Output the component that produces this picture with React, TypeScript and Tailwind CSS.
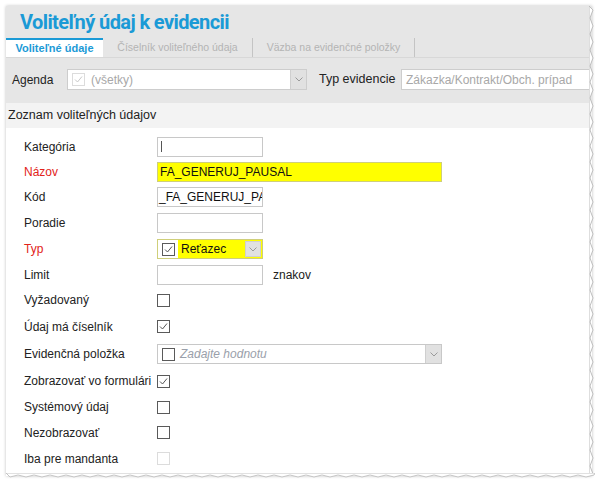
import React from "react";

const font = { fontFamily: '"Liberation Sans", Arial, sans-serif' };

function Check({ checked = false, disabled = false }: { checked?: boolean; disabled?: boolean }) {
  return (
    <div
      className={`w-[13px] h-[13px] border bg-white flex items-center justify-center ${
        disabled ? "border-[#dcdcdc]" : "border-[#5a5a5a]"
      }`}
    >
      {checked && (
        <svg width="11" height="11" viewBox="0 0 11 11">
          <path d="M2 5.5 L4.5 8 L9 2.5" fill="none" stroke={disabled ? "#c8c8c8" : "#555"} strokeWidth="1" />
        </svg>
      )}
    </div>
  );
}

function DropBtn({ className = "" }: { className?: string }) {
  return (
    <div className={`w-[16px] h-full bg-[#e1e1e1] border-l border-[#cfcfcf] flex items-center justify-center ${className}`}>
      <svg width="8" height="5" viewBox="0 0 8 5">
        <path d="M0.5 0.5 L4 4 L7.5 0.5" fill="none" stroke="#9a9a9a" strokeWidth="1" />
      </svg>
    </div>
  );
}

function Row({ h, label, red = false, children }: { h: string; label: string; red?: boolean; children?: React.ReactNode }) {
  return (
    <div className={`flex items-center ${h}`}>
      <div className={`w-[151px] shrink-0 pl-[18px] text-[12px] whitespace-nowrap ${red ? "text-[#e2231a]" : "text-[#222]"}`}>{label}</div>
      {children}
    </div>
  );
}

export default function App() {
  return (
    <div className="w-[610px] h-[488px] bg-white overflow-hidden" style={font}>
      <div className="relative ml-[6px] mt-[6px] w-[586px] h-[470px] bg-white shadow-[0_0_3px_rgba(0,0,0,0.25)]">
        {/* title */}
        <div className="h-[32px] bg-[#e6e6e6] pl-[14px] pt-[5px]">
          <div
            className="text-[#1b9ad6] font-bold text-[20px] leading-[22px] tracking-[-0.6px]"
            style={{ fontFamily: 'Roboto, "Liberation Sans", sans-serif' }}
          >
            Voliteľný údaj k evidencii
          </div>
        </div>
        {/* tabs */}
        <div className="h-[19px] bg-[#e6e6e6] flex items-stretch text-[10.5px]">
          <div className="w-[97px] bg-white border-t-2 border-[#1b9ad6] flex items-center justify-center font-bold text-[11px] text-[#1b9ad6]">
            Voliteľné údaje
          </div>
          <div className="w-[149px] flex items-center justify-center text-[#b4b4b4]">Číselník voliteľného údaja</div>
          <div className="w-px bg-[#c4c4c4]" />
          <div className="w-[161px] flex items-center justify-center text-[#b4b4b4]">Väzba na evidenčné položky</div>
          <div className="w-px bg-[#c4c4c4]" />
        </div>
        {/* filter */}
        <div className="h-[46px] bg-[#e6e6e6] border-t border-[#d8d8d8] pt-[11px] flex items-start text-[12px]">
          <div className="w-[61px] pl-[6px] h-[21px] flex items-center text-[#222]">Agenda</div>
          <div className="w-[240px] h-[21px] bg-white border border-[#cdcdcd] flex items-center">
            <div className="ml-[4px]">
              <Check checked disabled />
            </div>
            <span className="ml-[6px] text-[#a8a8a8]">(všetky)</span>
            <div className="flex-1" />
            <DropBtn />
          </div>
          <div className="ml-[12px] w-[82px] h-[21px] flex items-center text-[#222] text-[12.5px]">Typ evidencie</div>
          <div className="flex-1 h-[21px] bg-white border border-[#cdcdcd] border-r-0 flex items-center pl-[4px] text-[#a8a8a8] whitespace-nowrap overflow-hidden">
            Zákazka/Kontrakt/Obch. prípad
          </div>
        </div>
        {/* section header */}
        <div className="h-[25px] bg-[#f3f3f3] flex items-center pl-[2px] text-[12.5px] text-[#222]">Zoznam voliteľných údajov</div>
        {/* form */}
        <div className="pt-[6px]">
          <Row h="h-[25px]" label="Kategória">
            <div className="w-[106px] h-[20px] border border-[#c8c8c8] bg-white flex items-center pl-[3px]">
              <div className="w-px h-[11px] bg-[#555]" />
            </div>
          </Row>
          <Row h="h-[25px]" label="Názov" red>
            <div className="w-[285px] h-[20px] border border-[#cfcf7a] bg-[#ffff00] flex items-center pl-[2px] text-[12px] text-[#111]">
              FA_GENERUJ_PAUSAL
            </div>
          </Row>
          <Row h="h-[26px]" label="Kód">
            <div className="w-[106px] h-[20px] border border-[#c8c8c8] bg-white flex items-center pl-[1px] text-[12px] text-[#111] overflow-hidden whitespace-nowrap">
              _FA_GENERUJ_PA
            </div>
          </Row>
          <Row h="h-[26px]" label="Poradie">
            <div className="w-[106px] h-[20px] border border-[#c8c8c8] bg-white" />
          </Row>
          <Row h="h-[26px]" label="Typ" red>
            <div className="w-[106px] h-[20px] border border-[#cfcf7a] bg-[#ffff00] flex items-center">
              <div className="w-[20px] h-full bg-white flex items-center justify-center">
                <Check checked />
              </div>
              <span className="ml-[3px] text-[12px] text-[#111]">Reťazec</span>
              <div className="flex-1" />
              <div className="h-[16px] mr-[1px]">
                <DropBtn className="border border-[#cfcfcf]" />
              </div>
            </div>
          </Row>
          <Row h="h-[25px]" label="Limit">
            <div className="w-[106px] h-[20px] border border-[#c8c8c8] bg-white" />
            <span className="ml-[10px] text-[12px] text-[#222]">znakov</span>
          </Row>
          <Row h="h-[26px]" label="Vyžadovaný">
            <Check />
          </Row>
          <Row h="h-[27px]" label="Údaj má číselník">
            <Check checked />
          </Row>
          <Row h="h-[28px]" label="Evidenčná položka">
            <div className="w-[285px] h-[20px] border border-[#c8c8c8] bg-white flex items-center">
              <div className="ml-[4px]">
                <Check />
              </div>
              <span className="ml-[5px] text-[12px] italic text-[#9aa0aa]">Zadajte hodnotu</span>
              <div className="flex-1" />
              <DropBtn />
            </div>
          </Row>
          <Row h="h-[26px]" label="Zobrazovať vo formulári">
            <Check checked />
          </Row>
          <Row h="h-[26px]" label="Systémový údaj">
            <Check />
          </Row>
          <Row h="h-[25px]" label="Nezobrazovať">
            <Check />
          </Row>
          <Row h="h-[27px]" label="Iba pre mandanta">
            <Check disabled />
          </Row>
        </div>
        {/* torn edges */}
        <svg className="absolute right-[-3px] top-0" width="6" height="470" viewBox="0 0 6 470">
          <path
            d={"M0 0 " + Array.from({ length: 59 }, (_, i) => `L${i % 2 ? 1 : 4} ${i * 8 + 4}`).join(" ") + " L0 470 Z"}
            fill="white"
            stroke="#bdbdbd"
            strokeWidth="1"
          />
        </svg>
        <svg className="absolute left-0 bottom-[-3px]" width="589" height="6" viewBox="0 0 589 6">
          <path
            d={"M0 0 " + Array.from({ length: 74 }, (_, i) => `L${i * 8 + 4} ${i % 2 ? 2 : 4}`).join(" ") + " L589 0 Z"}
            fill="white"
            stroke="#c4c4c4"
            strokeWidth="1"
          />
        </svg>
      </div>
    </div>
  );
}
